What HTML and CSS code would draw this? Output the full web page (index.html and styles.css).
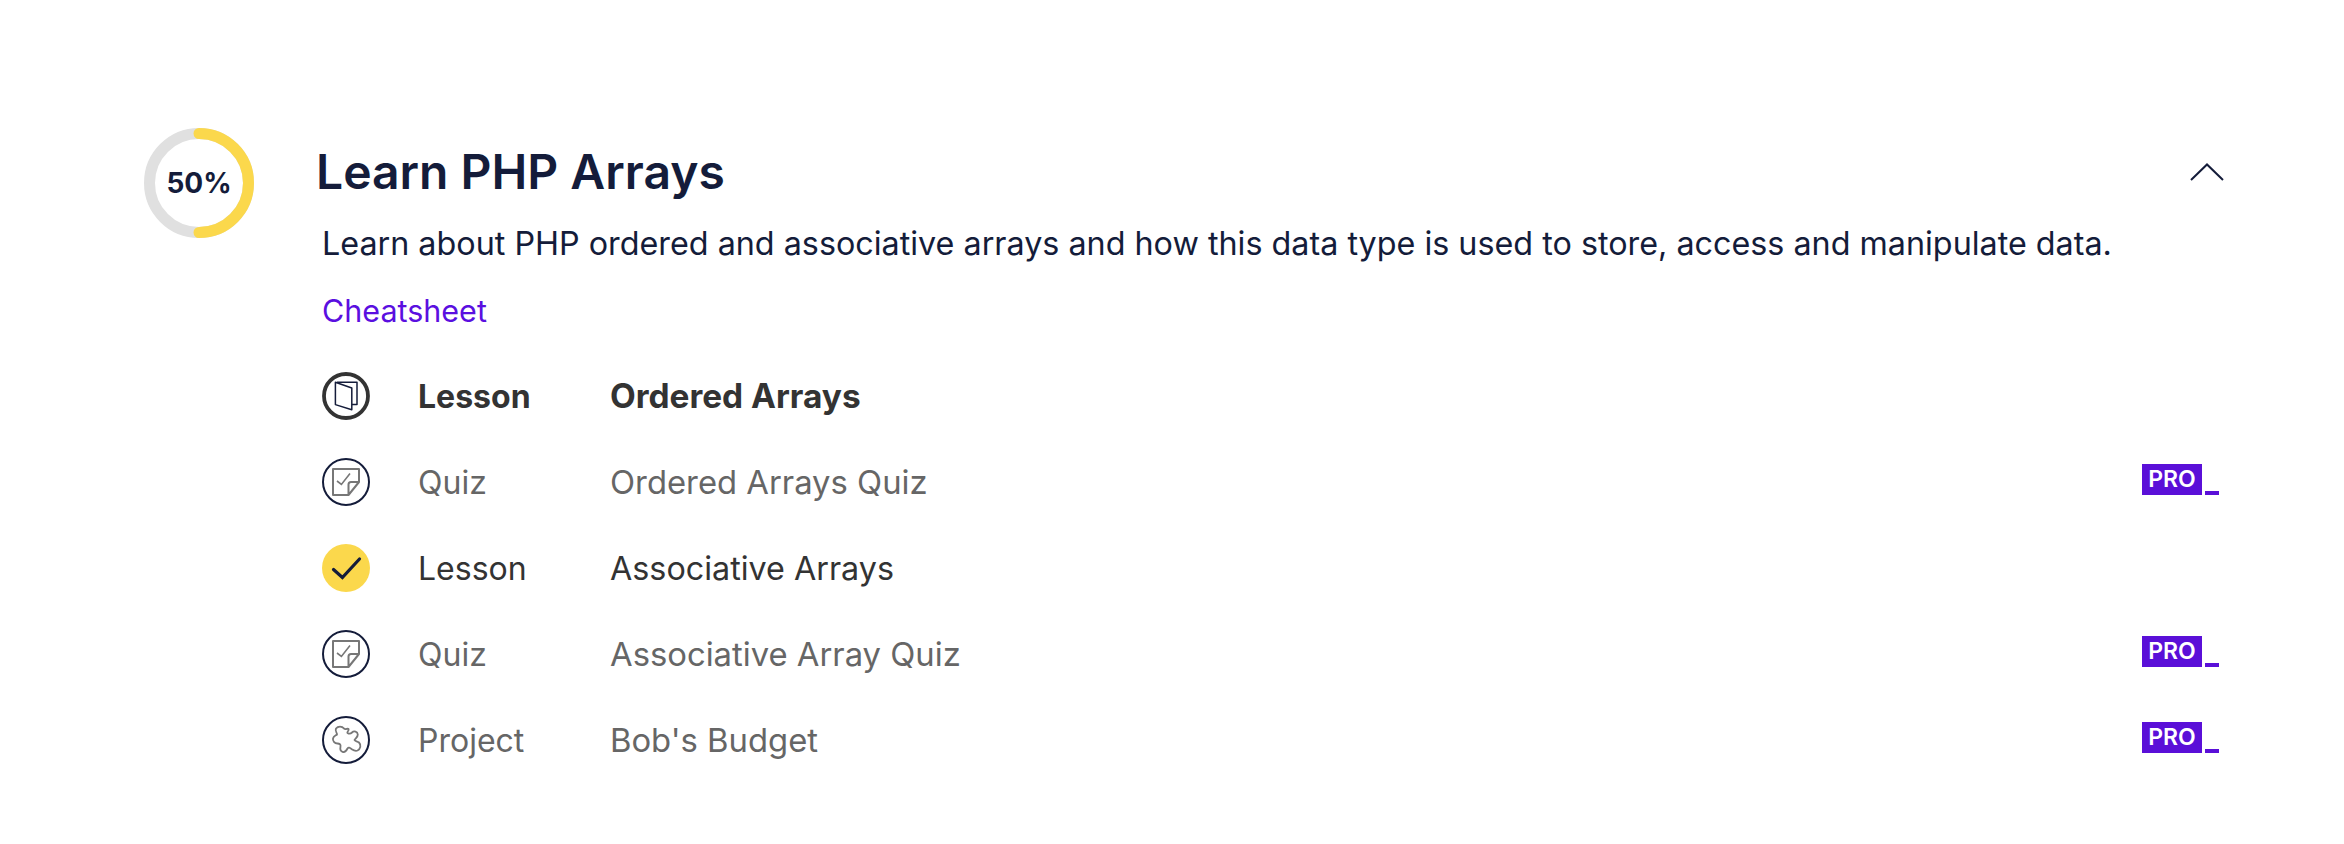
FILE: index.html
```html
<!DOCTYPE html>
<html lang="en">
<head>
  <meta charset="UTF-8">
  <title>Learn PHP Arrays</title>
  <link rel="stylesheet" href="styles.css">
</head>
<body>
  <div class="module">
    <div class="progress">
      <svg viewBox="0 0 110 110" width="110" height="110">
        <circle cx="55" cy="55" r="49.500" fill="none" stroke="#e0e0e0" stroke-width="11"/>
        <path d="M55 5.500a49.500 49.500 0 0 1 0 99" fill="none" stroke="#fbd84c" stroke-width="11" stroke-linecap="round"/>
      </svg>
      <span class="pct">50%</span>
    </div>
    <div class="main">
      <div class="head">
        <h2>Learn PHP Arrays</h2>
        <svg class="chev" viewBox="0 0 34 18" width="34" height="18"><path d="M1 17L17 1.500L33 17" fill="none" stroke="#141c3a" stroke-width="2"/></svg>
      </div>
      <p class="desc">Learn about PHP ordered and associative arrays and how this data type is used to store, access and manipulate data.</p>
      <a class="sheet" href="#">Cheatsheet</a>
      <ul class="items">
        <li class="item current">
          <span class="ico"><svg viewBox="0 0 48 48" width="48" height="48"><circle cx="24" cy="24" r="22" fill="none" stroke="#333" stroke-width="3.800"/><path d="M13.400 10.300L29.800 16V37.700L13.400 32.600zM15 10.300H35V32.600H29.800" fill="none" stroke="#141c3a" stroke-width="1.500" stroke-linejoin="round"/></svg></span>
          <span class="kind">Lesson</span><span class="name">Ordered Arrays</span>
        </li>
        <li class="item locked">
          <span class="ico"><svg viewBox="0 0 48 48" width="48" height="48"><circle cx="24" cy="24" r="23" fill="none" stroke="#141c3a" stroke-width="2"/><path d="M11 11H37V24L26.500 37H11zM37 24H29a2.500 2.500 0 0 0-2.500 2.500V37" fill="none" stroke="#777" stroke-width="2" stroke-linejoin="round"/><path d="M15 23L19.400 26.400L28 15.400" fill="none" stroke="#777" stroke-width="1.600"/></svg></span>
          <span class="kind">Quiz</span><span class="name">Ordered Arrays Quiz</span>
          <span class="pro"><b>PRO</b><i></i></span>
        </li>
        <li class="item done">
          <span class="ico"><svg viewBox="0 0 48 48" width="48" height="48"><circle cx="24" cy="24" r="24" fill="#fbd84c"/><path d="M11.500 25.500L20.400 33.500L37.500 15" fill="none" stroke="#141c3a" stroke-width="3.200" stroke-linecap="round"/></svg></span>
          <span class="kind">Lesson</span><span class="name">Associative Arrays</span>
        </li>
        <li class="item locked">
          <span class="ico"><svg viewBox="0 0 48 48" width="48" height="48"><circle cx="24" cy="24" r="23" fill="none" stroke="#141c3a" stroke-width="2"/><path d="M11 11H37V24L26.500 37H11zM37 24H29a2.500 2.500 0 0 0-2.500 2.500V37" fill="none" stroke="#777" stroke-width="2" stroke-linejoin="round"/><path d="M15 23L19.400 26.400L28 15.400" fill="none" stroke="#777" stroke-width="1.600"/></svg></span>
          <span class="kind">Quiz</span><span class="name">Associative Array Quiz</span>
          <span class="pro"><b>PRO</b><i></i></span>
        </li>
        <li class="item locked">
          <span class="ico"><svg viewBox="0 0 48 48" width="48" height="48"><circle cx="24" cy="24" r="23" fill="none" stroke="#141c3a" stroke-width="2"/><path d="M14 12.500C16 10 20 10 22 12.500C23.500 14 25.500 12 26.500 13C27.500 15 24.500 15.500 25.500 17C27 18 29 17.500 30 16.500C32 14.500 35.500 15.500 35.800 18.500C36 21 33 22.500 32.500 24C33 25.500 35.500 25 37 26.500C39.500 29 38.500 33 35.500 34.500C33 35.500 31 34 29.500 33C27.500 31.500 26.500 31 25.500 32.500C24.500 34.500 23.500 36.500 21 36C18.500 35.500 18 33 18.500 30.500C19 28.500 17.500 27.500 15.500 27.500C12.500 27.500 10.500 25 11 22.500C11.500 20 14 19.500 15 18.500C15.500 17 12.500 15.500 14 12.500z" fill="none" stroke="#777" stroke-width="1.800" stroke-linejoin="round"/></svg></span>
          <span class="kind">Project</span><span class="name">Bob's Budget</span>
          <span class="pro"><b>PRO</b><i></i></span>
        </li>
      </ul>
    </div>
  </div>
</body>
</html>
```

FILE: styles.css
```css
*{
  margin: 0;
  padding: 0;
  box-sizing: border-box;
}
body{
  background: #fff;
  font-family: "Inter", "Noto Sans", sans-serif;
  color: #141c3a;
}
ul,li{
  list-style: none;
}
.module{
  display: flex;
  padding: 128px 0 0 144px;
  width: 2344px;
}
.progress{
  width: 110px;
  height: 110px;
  position: relative;
  flex: none;
}
.progress svg{
  display: block;
}
.pct{
  position: absolute;
  left: 0;
  right: 0;
  top: 0;
  line-height: 110px;
  text-align: center;
  font-size: 28px;
  font-weight: 700;
}
.main{
  margin-left: 62px;
  padding-top: 15px;
  width: 1908px;
}
.head{
  display: flex;
  justify-content: space-between;
  align-items: center;
  height: 58px;
}
h2{
  font-size: 48px;
  font-weight: 600;
  line-height: 58px;
}
.desc{
  margin: 21px 0 0 6px;
  font-size: 32.3px;
  line-height: 44px;
}
.sheet{
  display: block;
  margin: 25px 0 0 6px;
  font-size: 30.5px;
  line-height: 40px;
  color: #5a0fe0;
  text-decoration: none;
}
.items{
  margin: 22px 0 0 6px;
}
.item{
  display: flex;
  align-items: center;
  height: 86px;
  font-size: 32px;
  color: #333;
}
.ico{
  width: 48px;
  height: 48px;
  flex: none;
  display: block;
}
.ico svg{
  display: block;
}
.kind{
  margin-left: 48px;
  width: 192px;
}
.name{
  flex: 1;
  font-size: 32.3px;
}
.current{
  font-weight: 700;
}
.current .name{
  font-size: 33.400px;
}
.locked{
  color: #666;
}
.locked .name{
  font-size: 32.800px;
}
.pro{
  display: flex;
  align-items: flex-end;
  margin: -6px 5px 0 0;
}
.pro b{
  display: block;
  width: 60px;
  height: 31px;
  background: #5a0fd8;
  color: #fff;
  font-size: 23px;
  font-weight: 600;
  line-height: 31px;
  text-align: center;
}
.pro i{
  display: block;
  width: 14px;
  height: 4px;
  margin-left: 3px;
  background: #5a0fd8;
}
```
